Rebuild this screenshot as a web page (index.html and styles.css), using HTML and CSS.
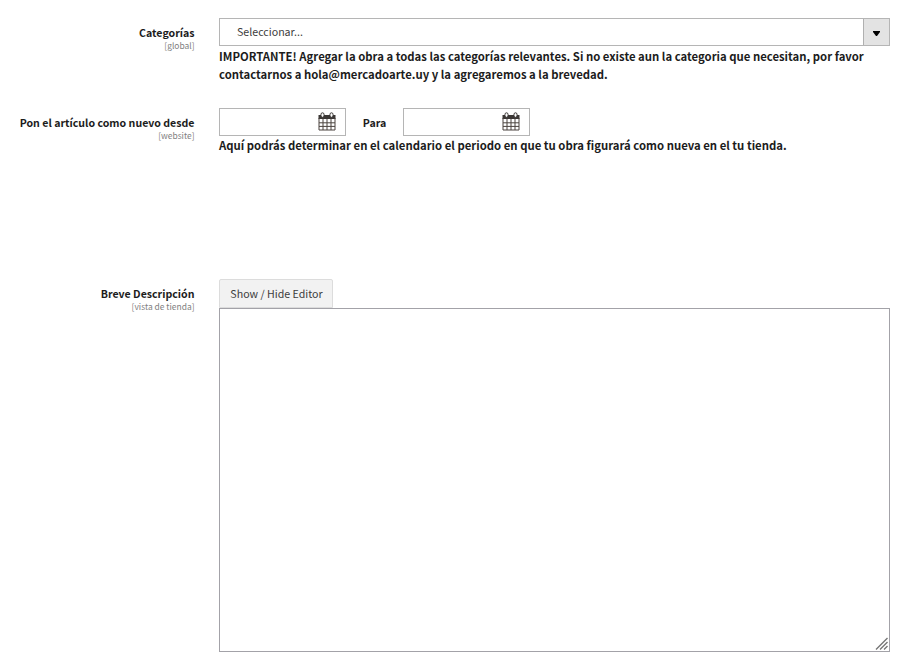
FILE: index.html
```html
<!DOCTYPE html>
<html lang="es">
<head>
  <meta charset="UTF-8">
  <meta name="viewport" content="width=device-width, initial-scale=1.0">
  <title>Nuevo artículo</title>
  <link rel="stylesheet" href="styles.css">
</head>
<body>

  <svg class="sprite" width="0" height="0">
    <symbol id="calendar" viewBox="0 0 18 19">
      <path d="M1 4h16v14H1z" fill="#fff"/>
      <path d="M0.5 3h17v4h-17z" fill="#3b3735"/>
      <path d="M1 6v12h16V6M5 7v11M9 7v11M13 7v11M1 10.8h16M1 14.4h16" fill="none" stroke="#4a433e"/>
      <rect x="3" y="0.8" width="3" height="4.5" rx="1.5" fill="#fff" stroke="#3b3735"/>
      <rect x="12" y="0.8" width="3" height="4.5" rx="1.5" fill="#fff" stroke="#3b3735"/>
    </symbol>
  </svg>

  <form class="form">
    <div class="field categories">
      <div class="label">
        <label>Categorías</label>
        <span class="scope">[global]</span>
      </div>
      <div class="control">
        <div class="select">
          <span class="select-text">Seleccionar...</span>
          <span class="select-arrow"><svg width="7" height="5" viewBox="0 0 7 5"><path d="M0 0h7v1L4 5H3L0 1z"/></svg></span>
        </div>
        <p class="note">IMPORTANTE! Agregar la obra a todas las categorías relevantes. Si no existe aun la categoria que necesitan, por favor<br>contactarnos a hola@mercadoarte.uy y la agregaremos a la brevedad.</p>
      </div>
    </div>

    <div class="field dates">
      <div class="label">
        <label>Pon el artículo como nuevo desde</label>
        <span class="scope">[website]</span>
      </div>
      <div class="control">
        <div class="date-range">
          <div class="date"><svg width="18" height="19"><use href="#calendar"/></svg></div>
          <label class="to">Para</label>
          <div class="date"><svg width="18" height="19"><use href="#calendar"/></svg></div>
        </div>
        <p class="note">Aquí podrás determinar en el calendario el periodo en que tu obra figurará como nueva en el tu tienda.</p>
      </div>
    </div>

    <div class="field description">
      <div class="label">
        <label>Breve Descripción</label>
        <span class="scope">[vista de tienda]</span>
      </div>
      <div class="control">
        <button type="button" class="toggle">Show / Hide Editor</button>
        <div class="editor">
          <svg class="grip" width="13" height="13" viewBox="0 0 13 13"><path d="M1 12.5L12.5 1M5 12.5L12.5 5M9 12.5L12.5 9" fill="none" stroke="#777" stroke-width="1.4"/></svg>
        </div>
      </div>
    </div>
  </form>

</body>
</html>
```
FILE: styles.css
```css
* {
  box-sizing: border-box;
}

body {
  margin: 0;
  background: #fff;
  color: #1c1c1c;
  font-family: "Noto Sans CJK SC", sans-serif;
  font-size: 10.65px;
  line-height: 18px;
}

.sprite {
  display: block;
}

.form {
  padding-top: 18px;
}

.field {
  display: grid;
  grid-template-columns: 194.5px 670.5px;
  column-gap: 24.5px;
}

.categories {
  height: 90px;
}

.dates {
  height: 171px;
}

.label {
  padding-top: 7px;
  text-align: right;
  font-size: 10.6px;
  font-weight: bold;
  line-height: 16px;
  white-space: nowrap;
}

.label label {
  display: block;
}

.scope {
  display: block;
  color: #808080;
  font-size: 8.45px;
  font-weight: normal;
  line-height: 9px;
}

.select {
  display: flex;
  height: 28px;
  border: 1px solid #b5b5b5;
}

.select-text {
  flex: 1;
  padding: 4px 17px;
  color: #3c3c3c;
}

.select-arrow {
  display: flex;
  align-items: center;
  justify-content: center;
  width: 26px;
  padding-top: 3px;
  border-left: 1px solid #b0b0b0;
  background: #e3e3e3;
}

.note {
  margin: 1px 0 0;
  font-size: 11.33px;
  font-weight: bold;
  white-space: nowrap;
}

.dates .note {
  margin-top: 0;
}

.date-range {
  display: flex;
}

.date {
  display: flex;
  align-items: flex-start;
  justify-content: flex-end;
  width: 127px;
  height: 28px;
  padding: 3px 9px 0 0;
  border: 1px solid #b5b5b5;
}

.to {
  width: 57px;
  padding-top: 6px;
  font-weight: bold;
  text-align: center;
}

.toggle {
  display: block;
  width: 114px;
  height: 29px;
  padding: 1px 0 0 1px;
  border: 1px solid #dcdcdc;
  border-radius: 2px 2px 0 0;
  background: #f2f2f2;
  color: #3c3c3c;
  font: inherit;
}

.editor {
  display: flex;
  align-items: flex-end;
  justify-content: flex-end;
  height: 344px;
  padding: 1px;
  border: 1px solid #a3a2a8;
}
```
